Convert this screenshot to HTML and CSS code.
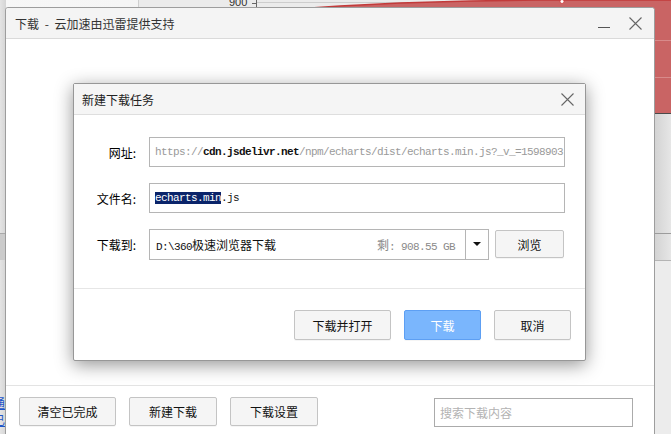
FILE: index.html
```html
<!DOCTYPE html>
<html lang="zh-CN">
<head>
<meta charset="utf-8">
<title>下载</title>
<link rel="stylesheet" href="styles.css">
</head>
<body>
<svg class="backdrop" width="671" height="434" viewBox="0 0 671 434">
  <defs>
    <linearGradient id="topg" x1="0" y1="0" x2="1" y2="0">
      <stop offset="0" stop-color="#f7f7f7"/>
      <stop offset="1" stop-color="#ececec"/>
    </linearGradient>
    <linearGradient id="sideg" x1="0" y1="0" x2="1" y2="0">
      <stop offset="0" stop-color="#e4e4e4"/>
      <stop offset="1" stop-color="#d4d4d4"/>
    </linearGradient>
    <linearGradient id="rsideg" x1="0" y1="0" x2="1" y2="0">
      <stop offset="0" stop-color="#d2d2d2"/>
      <stop offset="1" stop-color="#e6e6e6"/>
    </linearGradient>
  </defs>
  <rect x="0" y="0" width="671" height="434" fill="#ececec"/>
  <rect x="0" y="0" width="671" height="9" fill="url(#topg)"/>
  <rect x="138" y="0" width="533" height="9" fill="#ebebeb"/>
  <line x1="138.5" y1="0" x2="138.5" y2="9" stroke="#cfcfcf"/>
  <rect x="0" y="0" width="6" height="434" fill="url(#sideg)"/>
  <rect x="0" y="233" width="6" height="27" fill="#cbcbcb"/>
  <line x1="0" y1="233.5" x2="6" y2="233.5" stroke="#a9a9a9"/>
  <rect x="654" y="113" width="17" height="321" fill="url(#rsideg)"/>
  <rect x="654" y="260" width="17" height="174" fill="#ececec"/>
  <line x1="654" y1="233.5" x2="671" y2="233.5" stroke="#9c9c9c"/>
  <line x1="654" y1="260.5" x2="671" y2="260.5" stroke="#b4b4b4"/>
  <line x1="256" y1="2.5" x2="671" y2="2.5" stroke="#cdcdcd"/>
  <text x="229" y="6" class="axis">900</text>
  <line x1="256.5" y1="0" x2="256.5" y2="9" stroke="#666"/>
  <line x1="252" y1="3.5" x2="257" y2="3.5" stroke="#666"/>
  <polygon points="296,9 340,6 400,3 470,1 540,0 671,0 671,113 654,113 654,9" fill="#c96464"/>
  <polyline points="296,9 340,6 400,3 470,1 540,0 671,0" fill="none" stroke="#c23a3a" stroke-width="1.5"/>
  <line x1="654" y1="40.5" x2="671" y2="40.5" stroke="#d88a8a"/>
  <line x1="654" y1="77.5" x2="671" y2="77.5" stroke="#d88a8a"/>
  <line x1="654" y1="113.5" x2="671" y2="113.5" stroke="#4a4a4a"/>
  <circle cx="562" cy="1.5" r="2" fill="#fff" stroke="#d04040" stroke-width="0.8"/>
</svg>

<div class="side-links">
  <span class="side-link">通</span>
  <span class="side-link">已</span>
</div>

<section class="window">
  <header class="win-title">
    <span class="win-title-text">下载 - 云加速由迅雷提供支持</span>
    <div class="win-controls">
      <span class="icon-btn">
        <svg width="12" height="12" viewBox="0 0 12 12"><line x1="0" y1="10.5" x2="12" y2="10.5" stroke="#555" stroke-width="1"/></svg>
      </span>
      <span class="icon-btn">
        <svg width="13" height="13" viewBox="0 0 13 13"><path d="M0.5 0.5 L12.5 12.5 M12.5 0.5 L0.5 12.5" stroke="#666" stroke-width="1.1" fill="none"/></svg>
      </span>
    </div>
  </header>
  <div class="win-body"></div>
  <footer class="win-footer">
    <button class="btn btn-wide">清空已完成</button>
    <button class="btn btn-mid">新建下载</button>
    <button class="btn btn-mid">下载设置</button>
    <input class="search" type="text" placeholder="搜索下载内容">
  </footer>
</section>

<div class="dialog">
  <header class="dlg-title">
    <span class="dlg-title-text">新建下载任务</span>
    <span class="dlg-close">
      <svg width="13" height="13" viewBox="0 0 13 13"><path d="M0.5 0.5 L12.5 12.5 M12.5 0.5 L0.5 12.5" stroke="#666" stroke-width="1.1" fill="none"/></svg>
    </span>
  </header>
  <div class="dlg-body">
    <div class="row">
      <span class="label">网址:</span>
      <div class="field url-field"><span class="mono dim">https://</span><span class="mono strong">cdn.jsdelivr.net</span><span class="mono dim">/npm/echarts/dist/echarts.min.js?_v_=1598903</span></div>
    </div>
    <div class="row">
      <span class="label">文件名:</span>
      <div class="field name-field"><span class="mono sel">echarts.min</span><span class="mono">.js</span></div>
    </div>
    <div class="row">
      <span class="label">下载到:</span>
      <div class="path-group">
        <div class="path-text">
          <span class="path"><span class="mono">D:\360</span>极速浏览器下载</span>
          <span class="free">剩<span class="mono">: 908.55 GB</span></span>
        </div>
        <div class="path-drop"><span class="tri"></span></div>
      </div>
      <button class="btn btn-browse">浏览</button>
    </div>
  </div>
  <footer class="dlg-footer">
    <button class="btn dbtn-wide">下载并打开</button>
    <button class="btn btn-primary dbtn">下载</button>
    <button class="btn dbtn">取消</button>
  </footer>
</div>
</body>
</html>
```

FILE: styles.css
```css
* { box-sizing: border-box; }
html, body { margin: 0; padding: 0; }
body {
  width: 671px;
  height: 434px;
  overflow: hidden;
  position: relative;
  font-family: "Noto Sans CJK SC", "Noto Sans", sans-serif;
  font-size: 12px;
  color: #1a1a1a;
  background: #ececec;
}
.backdrop { position: absolute; left: 0; top: 0; }
.axis { font-family: "Liberation Sans", sans-serif; font-size: 11px; fill: #333; }

.side-links {
  position: absolute;
  left: -7px;
  top: 394px;
  display: flex;
  flex-direction: column;
  line-height: 17px;
}
.side-link { color: #1f56c9; text-decoration: underline; font-size: 12px; }

.window {
  position: absolute;
  left: 5px;
  top: 7px;
  width: 650px;
  height: 440px;
  background: #fff;
  border: 1px solid #9d9d9d;
  border-radius: 3px 3px 0 0;
  display: flex;
  flex-direction: column;
}
.win-title {
  height: 31px;
  flex: none;
  background: #f4f4f4;
  border-bottom: 1px solid #dadada;
  display: flex;
  align-items: center;
  padding: 0 12px 0 9px;
  border-radius: 3px 3px 0 0;
}
.win-title-text { color: #333; font-size: 12px; word-spacing: 3px; }
.win-controls { margin-left: auto; display: flex; align-items: center; gap: 18px; }
.icon-btn { display: flex; width: 13px; height: 13px; }

.win-body { height: 346px; flex: none; }
.win-footer {
  flex: none;
  border-top: 1px solid #e3e3e3;
  display: flex;
  align-items: flex-start;
  padding: 11px 21px 0 13px;
  gap: 13px;
}

.btn {
  font-family: "Noto Sans CJK SC", "Noto Sans", sans-serif;
  font-size: 12px;
  color: #111;
  background: #f5f5f5;
  border: 1px solid #c4c4c4;
  border-radius: 2px;
  padding: 0;
  margin: 0;
  height: 29px;
  box-shadow: 0 1px 0 rgba(0,0,0,0.04);
}
.btn-wide { width: 97px; }
.btn-mid { width: 88px; }
.search {
  margin-left: auto;
  margin-top: 1px;
  width: 199px;
  height: 29px;
  border: 1px solid #ababab;
  padding: 0 0 0 5px;
  font-family: "Noto Sans CJK SC", "Noto Sans", sans-serif;
  font-size: 12px;
  color: #333;
  outline: none;
}
.search::placeholder { color: #b3b3b3; }

.dialog {
  position: absolute;
  left: 73px;
  top: 83px;
  width: 513px;
  height: 278px;
  background: #fff;
  border: 1px solid #979797;
  border-radius: 2px;
  box-shadow: 0 4px 18px rgba(0,0,0,0.42);
  display: flex;
  flex-direction: column;
}
.dlg-title {
  height: 31px;
  flex: none;
  background: #f5f5f5;
  border-bottom: 1px solid #dedede;
  display: flex;
  align-items: center;
  padding: 0 11px 0 8px;
}
.dlg-title-text { color: #222; }
.dlg-close { margin-left: auto; display: flex; }

.dlg-body {
  height: 173px;
  flex: none;
  display: flex;
  flex-direction: column;
  gap: 16px;
  padding-top: 22px;
}
.row { display: flex; align-items: center; height: 30px; }
.label { width: 62px; text-align: right; margin-right: 13px; color: #000; }
.field {
  width: 416px;
  height: 30px;
  border: 1px solid #b5b5b5;
  padding-left: 5px;
  display: flex;
  align-items: center;
  white-space: nowrap;
  overflow: hidden;
}
.mono {
  font-family: "Liberation Mono", "DejaVu Sans Mono", monospace;
  font-size: 11px;
  letter-spacing: -0.6px;
}
.dim { color: #9a9a9a; }
.strong { color: #111; font-weight: bold; letter-spacing: -0.6px; }
.sel { background: #0a246a; color: #fff; line-height: 10px; padding: 1px 0; }
.name-field { color: #111; }

.path-group {
  width: 340px;
  height: 31px;
  border: 1px solid #b5b5b5;
  display: flex;
}
.path-text {
  flex: 1;
  display: flex;
  align-items: center;
  justify-content: space-between;
  padding: 0 10px 0 6px;
  white-space: nowrap;
}
.path { color: #111; }
.free { color: #8a8a8a; }
.path-drop {
  width: 23px;
  border-left: 1px solid #b5b5b5;
  display: flex;
  align-items: center;
  justify-content: center;
}
.tri {
  width: 0;
  height: 0;
  border-left: 4px solid transparent;
  border-right: 4px solid transparent;
  border-top: 4px solid #111;
}
.btn-browse { width: 69px; height: 28px; margin-left: 6px; }

.dlg-footer {
  flex: 1;
  border-top: 1px solid #e6e6e6;
  display: flex;
  justify-content: flex-end;
  align-items: flex-start;
  gap: 13px;
  padding: 21px 14px 0 0;
}
.dbtn-wide { width: 97px; height: 30px; }
.dbtn { width: 77px; height: 30px; }
.btn-primary { background: #7ab6fd; border-color: #5d9ff3; color: #fff; }
```
